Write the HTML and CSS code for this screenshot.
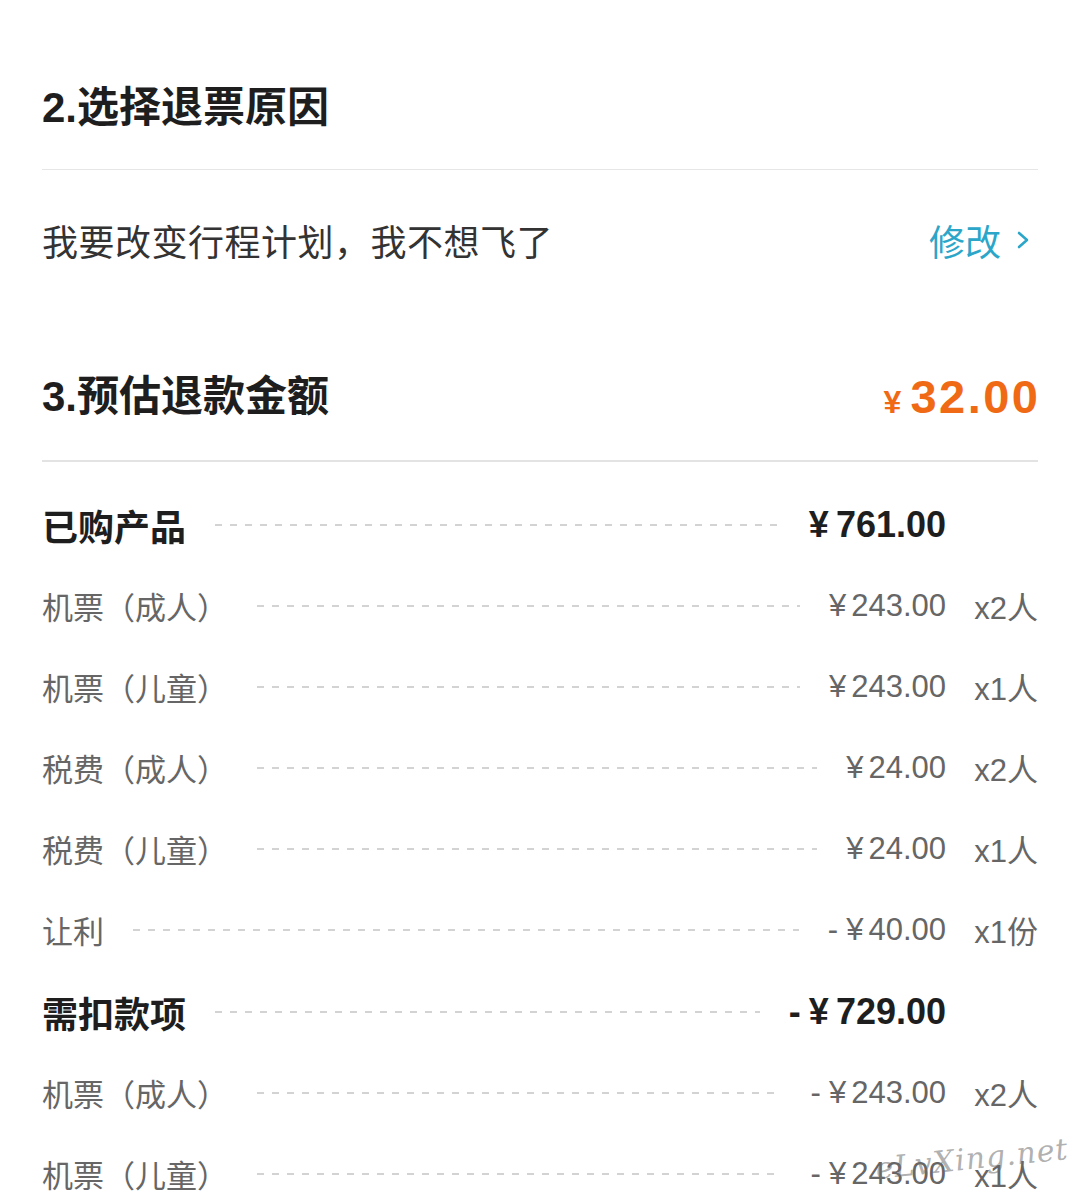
FILE: index.html
```html
<!DOCTYPE html>
<html lang="zh-CN">
<head>
<meta charset="utf-8">
<title>退票</title>
<link rel="stylesheet" href="styles.css">
</head>
<body>
<div class="page">
  <section class="sec-head sec-head-thin">
    <h2 class="sec-title">2.选择退票原因</h2>
  </section>
  <div class="reason-row">
    <span class="reason-text">我要改变行程计划，我不想飞了</span>
    <a class="edit" href="#">修改<svg class="chev" width="14" height="24" viewBox="0 0 14 24"><path d="M3 5 L11 12 L3 19" fill="none" stroke="#2ba6c9" stroke-width="2.6" stroke-linecap="round" stroke-linejoin="round"/></svg></a>
  </div>
  <section class="sec-head sec-head-thick">
    <h2 class="sec-title">3.预估退款金额</h2>
    <div class="total"><span class="total-yen">¥</span><span class="total-num">32.00</span></div>
  </section>
  <ul class="items">
    <li class="row row-group"><span class="label">已购产品</span><span class="dots"></span><span class="amt"><span class="yen">¥</span>761.00</span><span class="qty"></span></li>
    <li class="row"><span class="label">机票（成人）</span><span class="dots"></span><span class="amt"><span class="yen">¥</span>243.00</span><span class="qty">x2人</span></li>
    <li class="row"><span class="label">机票（儿童）</span><span class="dots"></span><span class="amt"><span class="yen">¥</span>243.00</span><span class="qty">x1人</span></li>
    <li class="row"><span class="label">税费（成人）</span><span class="dots"></span><span class="amt"><span class="yen">¥</span>24.00</span><span class="qty">x2人</span></li>
    <li class="row"><span class="label">税费（儿童）</span><span class="dots"></span><span class="amt"><span class="yen">¥</span>24.00</span><span class="qty">x1人</span></li>
    <li class="row"><span class="label">让利</span><span class="dots"></span><span class="amt"><span class="sign">-</span><span class="yen">¥</span>40.00</span><span class="qty">x1份</span></li>
    <li class="row row-group row-group-2"><span class="label">需扣款项</span><span class="dots"></span><span class="amt"><span class="sign">-</span><span class="yen">¥</span>729.00</span><span class="qty"></span></li>
    <li class="row"><span class="label">机票（成人）</span><span class="dots"></span><span class="amt"><span class="sign">-</span><span class="yen">¥</span>243.00</span><span class="qty">x2人</span></li>
    <li class="row"><span class="label">机票（儿童）</span><span class="dots"></span><span class="amt"><span class="sign">-</span><span class="yen">¥</span>243.00</span><span class="qty">x1人</span></li>
  </ul>
  <div class="watermark">eLvXing.net</div>
</div>
</body>
</html>
```
FILE: styles.css
```css
* { box-sizing: border-box; }
html, body { margin: 0; padding: 0; background: #fff; }
body {
  font-family: "Liberation Sans", "Noto Sans CJK SC", sans-serif;
  color: #222;
  overflow: hidden;
}
.page {
  position: relative;
  padding: 0 43px 0 42px;
  height: 1194px;
  overflow: hidden;
}
.sec-head {
  display: flex;
  align-items: center;
  justify-content: space-between;
}
.sec-head-thin {
  padding: 78px 0 31px;
  border-bottom: 1px solid #e6e6e6;
}
.sec-head-thick {
  padding: 57px 0 33px;
  border-bottom: 2px solid #e3e3e3;
}
.sec-title {
  margin: 0;
  font-size: 42px;
  line-height: 60px;
  font-weight: 700;
  color: #1e1e1e;
}
.reason-row {
  height: 140px;
  display: flex;
  align-items: center;
  justify-content: space-between;
}
.reason-text {
  font-size: 36px;
  letter-spacing: 0.5px;
  color: #333;
  font-family: "Noto Sans CJK SC", sans-serif;
}
.edit {
  display: flex;
  align-items: center;
  gap: 15px;
  padding-right: 8px;
  font-size: 36px;
  color: #2ba6c9;
  text-decoration: none;
  font-family: "Noto Sans CJK SC", sans-serif;
}
.chev { display: block; }
.total {
  display: flex;
  align-items: baseline;
  color: #f06a16;
  font-weight: 700;
}
.total-yen {
  font-size: 32px;
  margin-right: 9px;
}
.total-num {
  font-size: 47px;
  letter-spacing: 2.5px;
  margin-right: -2.5px;
  line-height: 60px;
}
.items {
  list-style: none;
  margin: 0;
  padding: 22px 0 0;
}
.row {
  height: 81px;
  display: flex;
  align-items: center;
  color: #666;
  font-size: 31px;
}
.row-group-2 { margin-top: 1px; }
.label {
  font-family: "Noto Sans CJK SC", sans-serif;
  white-space: nowrap;
}
.row-group .label {
  font-size: 36px;
  font-weight: 700;
  color: #1e1e1e;
}
.dots {
  flex: 1;
  height: 2px;
  margin: 0 29px;
  background-image: linear-gradient(to right, #d3d3d3 50%, transparent 50%);
  background-size: 15px 2px;
  background-repeat: repeat-x;
}
.amt {
  white-space: nowrap;
  font-size: 31px;
  color: #666;
}
.row-group .amt {
  font-size: 36px;
  font-weight: 700;
  color: #1e1e1e;
}
.yen { margin-right: 5px; }
.row-group .yen { margin-right: 7px; }
.sign { margin-right: 8px; }
.qty {
  width: 92px;
  text-align: right;
  white-space: nowrap;
}
.watermark {
  position: absolute;
  right: 12px;
  bottom: 18px;
  font-family: "DejaVu Serif", serif;
  font-style: italic;
  font-size: 30px;
  color: rgba(110, 110, 110, 0.55);
  transform: rotate(-6deg);
  letter-spacing: 1px;
}
```
